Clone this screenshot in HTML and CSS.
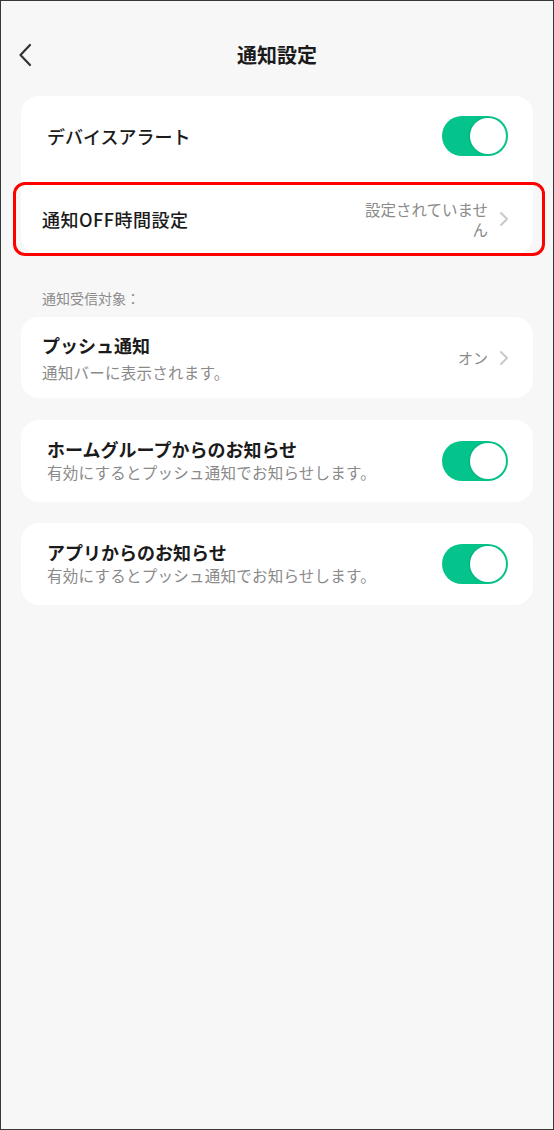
FILE: index.html
```html
<!DOCTYPE html>
<html lang="ja">
<head>
<meta charset="utf-8">
<title>通知設定</title>
<link rel="stylesheet" href="styles.css">
</head>
<body>
<div class="screen">
  <header class="topbar">
    <span class="back" aria-label="戻る">
      <svg width="14" height="24" viewBox="0 0 14 24"><path d="M12 2 L2.5 12 L12 22" fill="none" stroke="#333" stroke-width="2.2" stroke-linecap="round" stroke-linejoin="round"/></svg>
    </span>
    <h1 class="title">通知設定</h1>
  </header>

  <main class="content">
    <section class="card">
      <div class="row row-alert">
        <span class="row-title medium">デバイスアラート</span>
        <span class="toggle on"><span class="knob"></span></span>
      </div>
      <div class="row row-off highlighted">
        <span class="row-title medium wide">通知OFF時間設定</span>
        <span class="row-end">
          <span class="value value-wrap">設定されていません</span>
          <svg class="chev" width="10" height="16" viewBox="0 0 10 16"><path d="M2 2 L8 8 L2 14" fill="none" stroke="#c9c9c9" stroke-width="2" stroke-linecap="round" stroke-linejoin="round"/></svg>
        </span>
      </div>
    </section>

    <p class="section-label">通知受信対象：</p>

    <section class="card card-push">
      <div class="row-text">
        <span class="row-title bold">プッシュ通知</span>
        <span class="row-sub">通知バーに表示されます。</span>
      </div>
      <span class="row-end">
        <span class="value">オン</span>
        <svg class="chev" width="10" height="16" viewBox="0 0 10 16"><path d="M2 2 L8 8 L2 14" fill="none" stroke="#c9c9c9" stroke-width="2" stroke-linecap="round" stroke-linejoin="round"/></svg>
      </span>
    </section>

    <section class="card card-toggle">
      <div class="row-text">
        <span class="row-title bold">ホームグループからのお知らせ</span>
        <span class="row-sub">有効にするとプッシュ通知でお知らせします。</span>
      </div>
      <span class="toggle on"><span class="knob"></span></span>
    </section>

    <section class="card card-toggle">
      <div class="row-text">
        <span class="row-title bold">アプリからのお知らせ</span>
        <span class="row-sub">有効にするとプッシュ通知でお知らせします。</span>
      </div>
      <span class="toggle on"><span class="knob"></span></span>
    </section>
  </main>
</div>
</body>
</html>
```

FILE: styles.css
```css
html, body {
  margin: 0;
  padding: 0;
}

body {
  font-family: "Noto Sans CJK JP", "Noto Sans", sans-serif;
  color: #1b1b1b;
  background: #f7f7f7;
}

.screen {
  box-sizing: border-box;
  width: 554px;
  height: 1130px;
  border: 1px solid #383838;
  background: #f7f7f7;
  padding-top: 28px;
}

.topbar {
  position: relative;
  height: 52px;
  display: flex;
  align-items: center;
  justify-content: center;
}

.back {
  position: absolute;
  left: 17px;
  top: 14px;
  width: 14px;
  height: 24px;
  display: flex;
}

.title {
  margin: 0;
  font-size: 20px;
  font-weight: 700;
  line-height: 26px;
  color: #1b1b1b;
}

.content {
  padding: 15px 20px 0;
}

.card {
  background: #ffffff;
  border-radius: 18px;
}

.row {
  display: flex;
  align-items: center;
  justify-content: space-between;
}

.row-alert {
  height: 82px;
  padding: 0 25px 0 26px;
  box-sizing: border-box;
  padding-bottom: 3px;
}

.row-off {
  position: relative;
  height: 76px;
  padding: 6px 25px 0 21px;
  box-sizing: border-box;
}

.highlighted::after {
  content: "";
  position: absolute;
  top: 4px;
  left: -8px;
  right: -12px;
  bottom: -2px;
  border: 3.5px solid #ff0000;
  border-radius: 12px;
  pointer-events: none;
}

.row-title {
  font-size: 18px;
  line-height: 24px;
  color: #1b1b1b;
  white-space: nowrap;
}

.row-title.medium {
  font-weight: 500;
}

.row-title.wide {
  letter-spacing: 0.5px;
}

.row-title.bold {
  font-weight: 700;
}

.row-end {
  display: flex;
  align-items: center;
  gap: 11px;
}

.value {
  font-size: 15px;
  line-height: 20px;
  color: #8a8a8a;
}

.value-wrap {
  font-size: 15.5px;
  width: 126px;
  text-align: right;
}

.chev {
  display: block;
  margin-right: -1px;
}

.section-label {
  margin: 34px 0 9px 21px;
  font-size: 14px;
  line-height: 20px;
  color: #8c8c8c;
}

.row-text {
  display: flex;
  flex-direction: column;
}

.row-sub {
  font-size: 15.5px;
  letter-spacing: 0.25px;
  line-height: 20px;
  color: #8a8a8a;
  white-space: nowrap;
}

.card-push {
  display: flex;
  align-items: center;
  justify-content: space-between;
  height: 81px;
  box-sizing: border-box;
  padding: 0 25px 0 21px;
}

.card-push .row-text {
  gap: 5px;
  margin-top: -1px;
}

.card-toggle {
  display: flex;
  align-items: center;
  justify-content: space-between;
  height: 82px;
  box-sizing: border-box;
  padding: 0 25px 0 26px;
  margin-top: 22px;
}

.card-toggle .row-text {
  gap: 1px;
  margin-top: -3px;
}

.card-toggle + .card-toggle {
  margin-top: 21px;
}

.toggle {
  position: relative;
  flex: none;
  width: 66px;
  height: 40px;
  border-radius: 20px;
  background: #05c48b;
}

.knob {
  position: absolute;
  top: 2px;
  right: 2px;
  width: 36px;
  height: 36px;
  border-radius: 50%;
  background: #ffffff;
  box-shadow: -1px 0 2px rgba(0, 0, 0, 0.12);
}
```
